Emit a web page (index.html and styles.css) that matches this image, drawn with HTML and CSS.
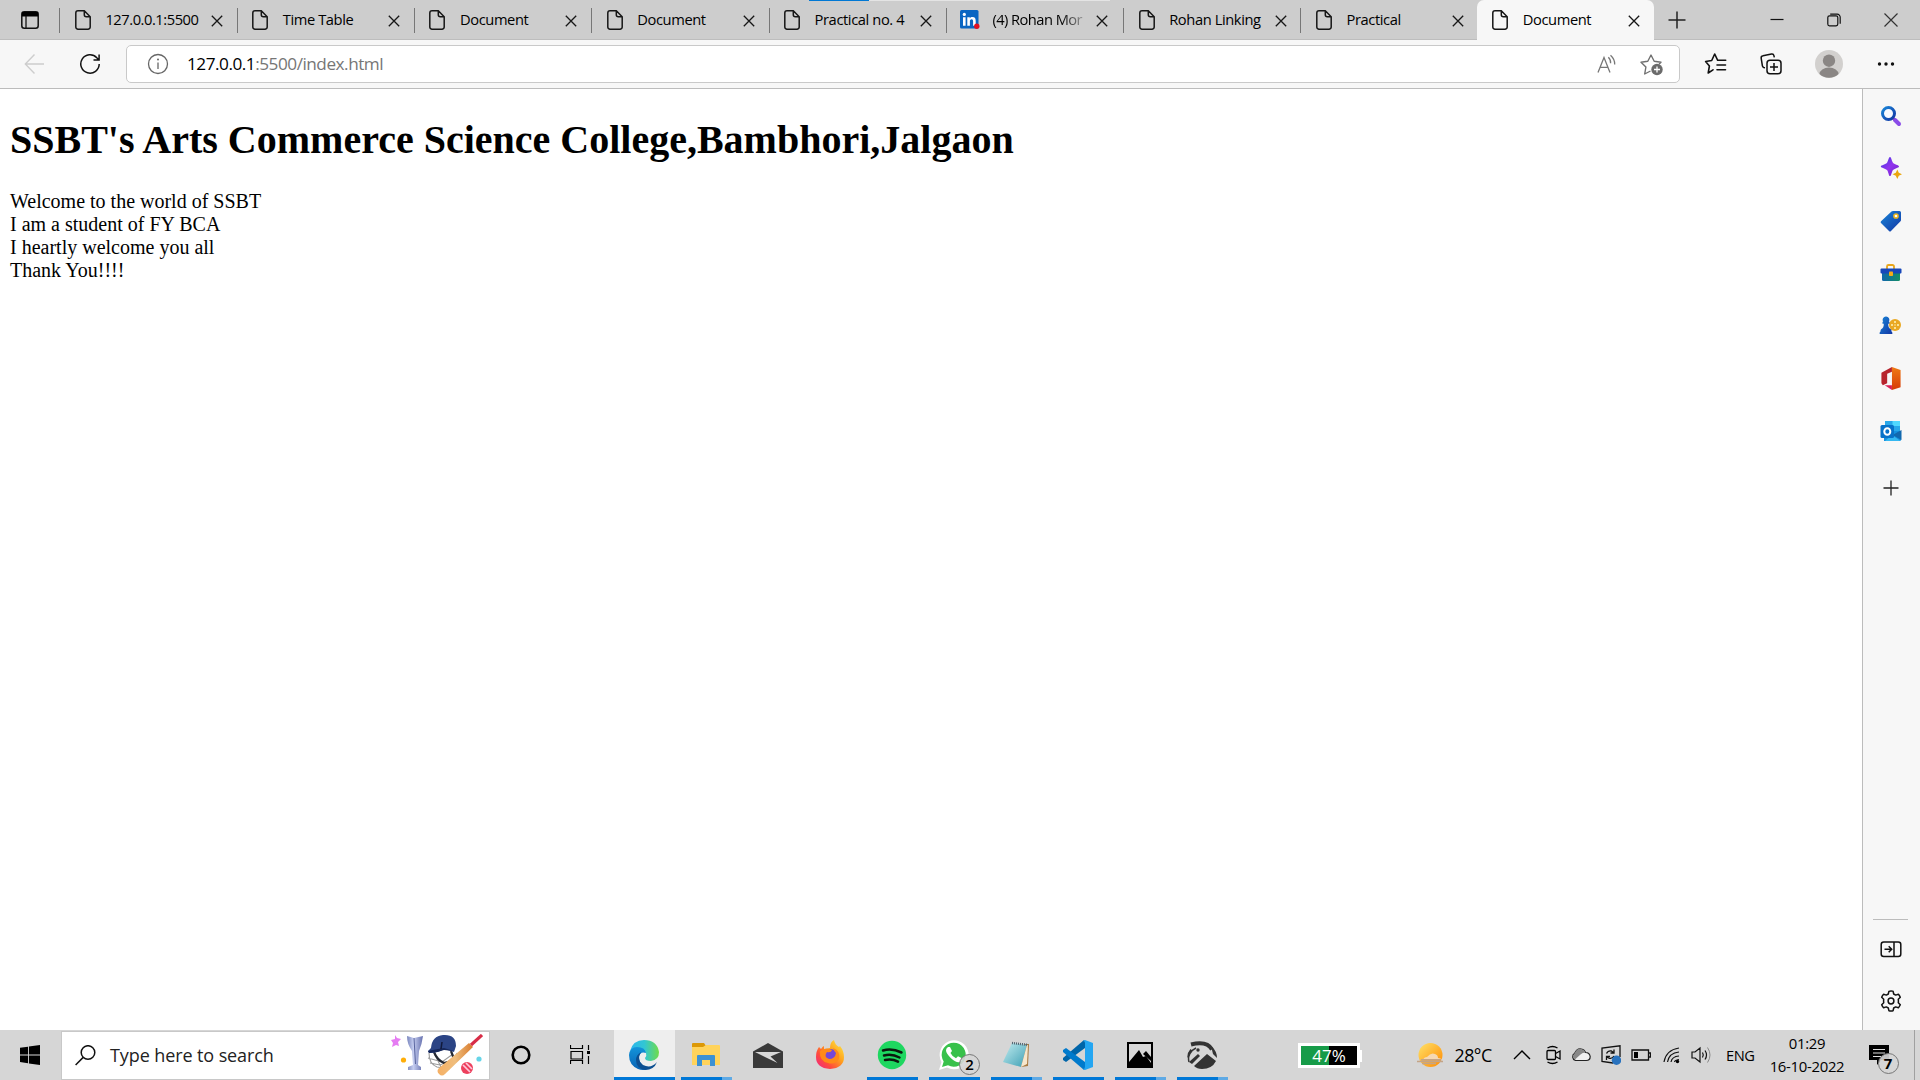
FILE: index.html
```html
<!DOCTYPE html>
<html lang="en">
<head>
<meta charset="utf-8">
<title>Document</title>
<link rel="stylesheet" href="styles.css">
</head>
<body>
<svg class="defs" width="0" height="0">
  <symbol id="file" viewBox="0 0 16 20"><path d="M3 .8h6.3L15.200 6.700V17a2.200 2.200 0 0 1-2.200 2.200H3A2.200 2.200 0 0 1 .8 17V3A2.200 2.200 0 0 1 3 .8zM9.300 1v3.700a2 2 0 0 0 2 2H15" fill="none" stroke="#161616" stroke-width="1.500"/></symbol>
  <symbol id="close" viewBox="0 0 12 12"><path d="M.8.8l10.400 10.400M11.200.8L.8 11.200" fill="none" stroke="#161616" stroke-width="1.300"/></symbol>
</svg>
<div class="screen">
  <header class="tabstrip">
    <div class="tab-menu"><svg width="18" height="18" viewBox="0 0 18 18"><rect x=".8" y=".8" width="16.400" height="16.400" rx="2.500" fill="none" stroke="#111" stroke-width="1.500"/><path d="M1 1h16v4.500H1z" fill="#000"/><path d="M5 5v12" stroke="#111" stroke-width="1.300"/></svg></div>
    <div class="tab"><svg class="favicon"><use href="#file"/></svg><span class="title tight">127.0.0.1:5500</span><svg class="x"><use href="#close"/></svg></div>
    <div class="tab"><svg class="favicon"><use href="#file"/></svg><span class="title">Time Table</span><svg class="x"><use href="#close"/></svg></div>
    <div class="tab"><svg class="favicon"><use href="#file"/></svg><span class="title">Document</span><svg class="x"><use href="#close"/></svg></div>
    <div class="tab"><svg class="favicon"><use href="#file"/></svg><span class="title">Document</span><svg class="x"><use href="#close"/></svg></div>
    <div class="tab"><svg class="favicon"><use href="#file"/></svg><span class="title">Practical no. 4</span><svg class="x"><use href="#close"/></svg></div>
    <div class="tab"><svg class="favicon linkedin" viewBox="0 0 20 20"><rect width="18.500" height="18.500" rx="1.500" fill="#0a66c2"/><path d="M3 7.300h2.600v8.500H3zM7.300 7.300h2.500v1.200c.5-.9 1.500-1.400 2.700-1.400 2.500 0 3.200 1.600 3.200 3.900v4.800h-2.600v-4.300c0-1.100-.2-2.200-1.500-2.200s-1.700 1-1.700 2.100v4.400H7.300z" fill="#fff"/><circle cx="4.300" cy="4.400" r="1.600" fill="#fff"/><circle cx="16.800" cy="16.300" r="2.700" fill="#e01020"/></svg><span class="title fade">(4) Rohan Mor</span><svg class="x"><use href="#close"/></svg></div>
    <div class="tab"><svg class="favicon"><use href="#file"/></svg><span class="title">Rohan Linking</span><svg class="x"><use href="#close"/></svg></div>
    <div class="tab"><svg class="favicon"><use href="#file"/></svg><span class="title">Practical</span><svg class="x"><use href="#close"/></svg></div>
    <div class="tab active"><svg class="favicon"><use href="#file"/></svg><span class="title">Document</span><svg class="x"><use href="#close"/></svg></div>
    <svg class="newtab" width="18" height="18" viewBox="0 0 18 18"><path d="M9 .5v17M.5 9h17" stroke="#222" stroke-width="1.500"/></svg>
    <div class="window-buttons">
      <svg viewBox="0 0 14 14"><path d="M.5 6.500h13" stroke="#111" stroke-width="1.200"/></svg>
      <svg viewBox="0 0 14 14"><g fill="none" stroke="#111" stroke-width="1.200"><rect x=".8" y="2.800" width="10" height="10" rx="1.700"/><path d="M3.200 1.200h7a3 3 0 0 1 3 3v6.600"/></g></svg>
      <svg viewBox="0 0 14 14"><path d="M.5.500l13 13M13.500.500l-13 13" stroke="#333" stroke-width="1.200"/></svg>
    </div>
    <div class="load-bar"></div>
  </header>

  <div class="toolbar">
    <svg class="back" width="21" height="22" viewBox="0 0 21 22"><path d="M20 11H1.500M10.500 1.500L1.300 11l9.200 9.500" fill="none" stroke="#cdcdcd" stroke-width="1.400"/></svg>
    <svg class="reload" width="22" height="22" viewBox="0 0 22 22"><path d="M20.200 11A9.200 9.200 0 1 1 17.800 4.800L20 7M20.100 1.500V7h-5.600" fill="none" stroke="#111" stroke-width="1.500"/></svg>
    <div class="address">
      <svg width="22" height="22" viewBox="0 0 22 22"><circle cx="11" cy="11" r="9.500" fill="none" stroke="#666" stroke-width="1.300"/><path d="M11 9.500v6.500" stroke="#666" stroke-width="1.300"/><circle cx="11" cy="6.600" r="1" fill="#666"/></svg>
      <span class="url">127.0.0.1<span class="path">:5500/index.html</span></span>
      <svg class="read" width="20" height="20" viewBox="0 0 20 20"><g fill="none" stroke="#777" stroke-width="1.300"><path d="M1 18.500L7 3.500l6 15M3.200 13.300h7.600M11.300 3.300q2.600 2.300 2.300 6M13.500 1.200q4.400 4 4.200 9.200"/></g></svg>
      <svg class="star-add" width="24" height="24" viewBox="0 0 24 24"><path d="M10.500 19l-5.800 3 1.200-7L1 10.200l6.800-1L11 3l3.200 6.200 6.800 1-2 2" fill="none" stroke="#707070" stroke-width="1.400" stroke-linejoin="round"/><circle cx="17" cy="17.500" r="5.700" fill="#6b6b6b"/><path d="M17 14.500v6M14 17.500h6" stroke="#fff" stroke-width="1.300"/></svg>
    </div>
    <div class="actions">
      <svg viewBox="0 0 24 24"><path d="M9 17.800l-4.800 3.200 1.200-7L1.600 9.500l6.100-1L10.700 2l3 6.300h8M13 13h8.500M13 17.700h8.500" fill="none" stroke="#111" stroke-width="1.600" stroke-linejoin="round" stroke-linecap="round"/></svg>
      <svg viewBox="0 0 24 24"><g fill="none" stroke="#111" stroke-width="1.500"><rect x="8" y="8.200" width="14" height="13.500" rx="3"/><path d="M15 11v8M11 15h8M6 15.700l-1.300-.2a2 2 0 0 1-1.300-1.600L2.200 6.300A2.200 2.200 0 0 1 4 3.800l8.500-1.700a2.200 2.200 0 0 1 2.500 1.700l.3 1.500"/></g></svg>
      <svg class="avatar" viewBox="0 0 28 28"><circle cx="14" cy="14" r="14" fill="#d2d0ce"/><circle cx="14" cy="10.700" r="6.200" fill="#8a8684"/><path d="M4.500 24a9.500 6.500 0 0 1 19 0A14 14 0 0 1 4.500 24z" fill="#8a8684"/></svg>
      <svg viewBox="0 0 24 24"><g fill="#111"><circle cx="5.500" cy="12" r="1.700"/><circle cx="12" cy="12" r="1.700"/><circle cx="18.500" cy="12" r="1.700"/></g></svg>
    </div>
  </div>

  <div class="middle">
    <main class="page">
      <h1>SSBT's Arts Commerce Science College,Bambhori,Jalgaon</h1>
      <p>Welcome to the world of SSBT<br>I am a student of FY BCA<br>I heartly welcome you all<br>Thank You!!!!</p>
    </main>
    <aside class="sidebar">
      <svg viewBox="0 0 22 22"><defs><linearGradient id="sb" x2="1" y2="1"><stop stop-color="#1a86d8"/><stop offset="1" stop-color="#1236a4"/></linearGradient></defs><path d="M13 13l2 2" stroke="#3a3340" stroke-width="2.500"/><circle cx="8.500" cy="8.500" r="6" fill="#f7faff" stroke="url(#sb)" stroke-width="3"/><path d="M15 15l4 4" stroke="#8a4be8" stroke-width="4" stroke-linecap="round"/></svg>
      <svg viewBox="0 0 22 22"><defs><linearGradient id="pu" x2="1" y2="1"><stop stop-color="#3a3be0"/><stop offset=".5" stop-color="#9333ee"/><stop offset="1" stop-color="#6a25c8"/></linearGradient></defs><path d="M10 0c1.300 0 1.600 3.500 2.800 5.400C14 7.200 19 8 19 9.400s-5 2-6.200 3.800C11.600 15 11.300 19 10 19s-1.500-4-2.800-5.800C6 11.400.800 10.800.800 9.400s5.200-2 6.400-4C8.400 3.500 8.700 0 10 0z" fill="url(#pu)"/><path d="M17.300 12.500l1.500 3.200 3.200 1.500-3.200 1.500-1.500 3.300-1.500-3.300-3.300-1.500 3.300-1.500z" fill="#eaa60d"/></svg>
      <svg viewBox="0 0 22 22"><path d="M13 1h6.500A1.500 1.500 0 0 1 21 2.500V10q0 .7-.5 1.200L11 21q-1 1-2 0L1 13q-.8-.8 0-1.700L11.500 1.600Q12 1 13 1z" fill="url(#sb)"/><circle cx="16" cy="6" r="2.100" fill="#fffef5" stroke="#edb51c" stroke-width="1.500"/></svg>
      <svg viewBox="0 0 22 22"><defs><linearGradient id="gr" x2="1"><stop stop-color="#1166ad"/><stop offset="1" stop-color="#138e65"/></linearGradient></defs><path d="M7 7V4.500A1.500 1.500 0 0 1 8.500 3h4A1.500 1.500 0 0 1 14 4.500V7" fill="none" stroke="#e9a61a" stroke-width="1.800"/><path d="M2 8h18v9.500a1.500 1.500 0 0 1-1.500 1.500h-15A1.500 1.500 0 0 1 2 17.500z" fill="url(#gr)"/><rect x=".5" y="6.500" width="21" height="5" rx="1" fill="#1747ba"/><rect x="9" y="9.500" width="4" height="4.500" rx=".8" fill="#f4ab18"/></svg>
      <svg class="games" viewBox="0 0 22 22"><circle cx="15.500" cy="10" r="6" fill="#e9a821"/><g fill="#fff4b7"><circle cx="12.500" cy="10" r="1"/><circle cx="15.500" cy="7" r="1"/><circle cx="18.500" cy="10" r="1"/><circle cx="15.500" cy="13" r="1"/><circle cx="15.500" cy="10" r=".7"/></g><path d="M6.500 1.500a3.300 3.300 0 0 1 2.800 5.200H10v2H8.700c0 3 .8 4.300 2.300 5.300 1 .7 1 1.500 1 2.500.8.400 1 1.200.8 2.500H.2c-.2-1.300 0-2.100.8-2.500 0-1 0-1.800 1-2.500 1.500-1 2.300-2.300 2.300-5.300H3v-2h.7a3.300 3.300 0 0 1 2.800-5.200z" fill="url(#sb)"/></svg>
      <svg class="office" viewBox="0 0 22 24"><defs><linearGradient id="of" y2="1" x2="0"><stop stop-color="#ef7b14"/><stop offset="1" stop-color="#d63a07"/></linearGradient></defs><path d="M1 6L12 0v5L7 7v10l-4.500 2L1 17z" fill="#b7242d"/><path d="M4.500 19H12v5z" fill="#d91f57"/><path d="M12 0l9 3v18l-9 3z" fill="url(#of)"/></svg>
      <svg viewBox="0 0 22 22"><path d="M5 1h14a1 1 0 0 1 1 1v10H5z" fill="#28a8ea"/><path d="M12.500 1H20v5h-7.500z" fill="#50d9ff"/><path d="M4 11h17v8.500a1.500 1.500 0 0 1-1.500 1.500H4z" fill="#1490df"/><path d="M21.500 10v10l-9-5z" fill="#1268ae"/><path d="M5 21h15.500L12 15z" fill="#35b8f1"/><rect x=".5" y="5" width="13.500" height="13" rx="1.500" fill="#0872c9"/><ellipse cx="7.300" cy="11.500" rx="3" ry="3.300" fill="none" stroke="#fff" stroke-width="2"/></svg>
      <svg class="side-plus" viewBox="0 0 22 22"><path d="M11 3.500v15M3.500 11h15" stroke="#222" stroke-width="1.300"/></svg>
      <div class="side-bottom">
        <svg viewBox="0 0 22 22"><g fill="none" stroke="#111" stroke-width="1.500"><rect x="1.200" y="4" width="19.600" height="14.500" rx="2.500"/><path d="M14 4v14.500M4.500 11.200h7M8.700 8.300l3 2.900-3 3"/></g></svg>
        <svg viewBox="0 0 22 22"><path d="M11 1q1.800 0 2.100.3l.6 2.700 2 1.100 2.700-.8q1 1 1.900 3l-2 2q.2 1.700 0 3.400l2 2q-.9 2-1.900 3l-2.700-.8-2 1.100-.6 2.700Q11 21.300 8.900 20.700L8.300 18l-2-1.100-2.700.8q-1.300-1.300-1.900-3l2-2q-.2-1.700 0-3.400l-2-2q.6-1.700 1.900-3l2.700.8 2-1.100.6-2.700Q9.500 1 11 1z" fill="none" stroke="#111" stroke-width="1.500" stroke-linejoin="round"/><circle cx="11" cy="11" r="2.900" fill="none" stroke="#111" stroke-width="1.500"/></svg>
      </div>
    </aside>
  </div>

  <footer class="taskbar">
    <div class="start"><svg width="20" height="20" viewBox="0 0 20 20"><path d="M0 2.800l8-1.100v7.700H0zM8.900 1.600L20 0v9.400H8.900zM0 10.400h8v7.800l-8-1.100zM8.900 10.400H20V20L8.900 18.400z"/></svg></div>
    <div class="search">
      <svg width="21" height="21" viewBox="0 0 21 21"><circle cx="13" cy="7.500" r="6.800" fill="none" stroke="#111" stroke-width="1.500"/><path d="M8.200 12.400L.6 20" stroke="#111" stroke-width="1.500"/></svg>
      <span class="search-text">Type here to search</span>
      <svg class="cricket" width="92" height="42" viewBox="0 0 92 42">
        <defs><linearGradient id="cup"><stop stop-color="#7885bd"/><stop offset=".4" stop-color="#c5cdf0"/><stop offset="1" stop-color="#6570ae"/></linearGradient><linearGradient id="bat"><stop stop-color="#f6b064"/><stop offset=".5" stop-color="#efbd7c"/><stop offset="1" stop-color="#d87b2d"/></linearGradient></defs>
        <path d="M4 1l2 3 4 1-3 3 1 4-3-1-4 2 1-4-2-3 4-1z" fill="#e57cf2"/><circle cx="12.500" cy="26" r="2.600" fill="#ffae08"/>
        <path d="M16 2l7 2 9-2q-1 8-4 15l-1 14 3 2v3H17v-3l5-2-1-14Q16 10 16 2z" fill="url(#cup)"/><path d="M23 4l1.500 26" stroke="#59659f" stroke-width="1"/>
        <path d="M38 19q0 11 8 14l12 2 8-16M37 24l14 4 11-8M39 29l10 2 12-5M43 19l7 14" fill="none" stroke="#999" stroke-width="1.100"/>
        <path d="M43 18q3 8 10 11l8-2M60 17l3 8" fill="none" stroke="#252933" stroke-width="2.200"/>
        <path d="M37 17l3-3Q41 2 52 1q13-1 13 11l-2 6-10-3q-6 4-15 4z" fill="#2b4485"/><path d="M37 17q9-2 16-3l10 3-10-1q-7 3-15 3z" fill="#16275a"/><path d="M51 8l-1 7" stroke="#111a3b" stroke-width="1.500"/>
        <path d="M78 9l4 4-28 27q-3 3-6 0-3-3 0-6z" fill="url(#bat)"/><path d="M80 11L91 1" stroke="#d82d47" stroke-width="3.200"/>
        <circle cx="76" cy="34" r="6" fill="#ed405d"/><path d="M72 31l7 7M75 29l6 6" stroke="#ffc7db" stroke-width="1.700"/><circle cx="88" cy="25" r="2.600" fill="#66d5e8"/>
      </svg>
    </div>
    <div class="sys cortana"><svg width="20" height="20" viewBox="0 0 20 20"><circle cx="10" cy="10" r="8.300" fill="none" stroke="#000" stroke-width="2.600"/></svg></div>
    <div class="sys task-view"><svg width="20" height="20" viewBox="0 0 20 20"><path d="M.5 0v3.500h12V0M.5 19v-3.500h12V19M1 6.500h11.500v7.500H1zM18.500 0v5M18.500 11v8" fill="none" stroke="#000" stroke-width="1.200"/><path d="M17 6h3v3h-3z"/></svg></div>
    <div class="apps">
      <div class="app current"><svg width="30" height="30" viewBox="0 0 30 30"><defs><linearGradient id="e1" x2="1"><stop stop-color="#2ab5ee"/><stop offset=".5" stop-color="#32c6d3"/><stop offset="1" stop-color="#70dc49"/></linearGradient><linearGradient id="e2" x2="0" y2="1"><stop stop-color="#1394da"/><stop offset="1" stop-color="#0863b4"/></linearGradient></defs><path d="M1 11Q4 0 15 0q13 0 15 12 0 8-8 9-6 0-6-3 2-2 1-5Q13 6 1 11z" fill="url(#e1)"/><path d="M0 15Q1 7 8 7q8 0 9 6-6-2-7 4 0 8 9 12-5 2-10 0Q0 25 0 15z" fill="url(#e2)"/><path d="M12 12q-5 8 2 13 8 4 14-3-3 8-12 8Q7 28 7 20q0-5 5-8z" fill="#0c4f91"/></svg></div>
      <div class="app stack"><svg width="28" height="26" viewBox="0 0 28 26"><path d="M0 2q0-1 1-1h11l2 3-2 4H0z" fill="#dc9806"/><path d="M0 5h11l3-2h13q1 0 1 1v19H0z" fill="#ffd35b"/><path d="M5 24V14q0-1 1-1h16q1 0 1 1v10h-5v-6h-8v6z" fill="#3c91d3"/></svg></div>
      <div class="app"><svg class="mail" width="30" height="25" viewBox="0 0 30 25"><path d="M0 8.500L15 0l15 8.500V25H0z" fill="#3a3a3a"/><path d="M2 9h26L17.500 13.500l7 6.500L13 14.500z" fill="#d8d8d8"/></svg></div>
      <div class="app"><svg width="30" height="30" viewBox="0 0 30 30"><defs><linearGradient id="ff" x1="1" x2="0" y2="1"><stop stop-color="#fff14a"/><stop offset=".4" stop-color="#ffa21d"/><stop offset=".7" stop-color="#ff4b3d"/><stop offset="1" stop-color="#ec228f"/></linearGradient></defs><path d="M4 7l2 2q2-3 3-3v3l6-1q0-6 4-8 1 5 5 7l1-1q4 5 4 11 0 11-14 12Q1 28 1 17 1 11 4 7z" fill="url(#ff)"/><circle cx="16" cy="15" r="6" fill="#7548d7"/><path d="M5 11q5-4 12-1-1 3-5 2-4 5 2 7 6 0 7-6-2-2-3-5 8 3 6 11-4 6-11 4Q4 21 5 11z" fill="#ff8a19"/></svg></div>
      <div class="app open"><svg width="30" height="30" viewBox="0 0 30 30"><circle cx="15" cy="15" r="14.200" fill="#1ed760"/><path d="M6 10.500q9-2.500 18.500 2M7 15.500q8-2 15.500 2M8 20q7-1.700 13 1.700" fill="none" stroke="#0b190e" stroke-width="2.500" stroke-linecap="round"/></svg></div>
      <div class="app open"><svg width="32" height="32" viewBox="0 0 32 32"><path d="M1 31l2.500-8A14.500 14.500 0 1 1 9 28.500z" fill="#fff"/><path d="M4 28l1.700-5.600A12 12 0 1 1 10 26.300z" fill="#38c14b"/><path d="M10 8h2l2 4-1.500 2q2 4 5.500 5.300l2-2 4 2q0 3-3 4-3 .5-8-4-5-5-5-8 0-2 2-3.300z" fill="#fff"/></svg><span class="badge">2</span></div>
      <div class="app stack"><svg width="30" height="28" viewBox="0 0 30 28"><defs><linearGradient id="np" x2="1" y2="1"><stop stop-color="#c3edf0"/><stop offset="1" stop-color="#3e9fb4"/></linearGradient></defs><path d="M24 3h4l-1 22-7 1z" fill="#a97b42"/><path d="M11 2l15 2-6 22-18-5z" fill="url(#np)"/><path d="M26 4l-6 22 6-3 1-19z" fill="#f6e7cd"/><path d="M11 2l16 2" stroke="#526370" stroke-width="2.500" stroke-dasharray="1 1"/></svg></div>
      <div class="app open"><svg width="30" height="30" viewBox="0 0 30 30"><path d="M22 8L3 22l-3-2v-2L21 0l1 1z" fill="#0065a9"/><path d="M22 22L3 8 0 10v2l21 18 1-1z" fill="#007acc"/><path d="M22 0l8 3v24l-8 3-2-1q2 0 2-2V3q0-2-2-2z" fill="#24a6f2"/></svg></div>
      <div class="app stack"><svg width="26" height="26" viewBox="0 0 26 26"><path d="M0 0h26v26H0z"/><path d="M2 2h22v19l-5-7-3 1-4-7L2 20z" fill="#d8d8d8"/><path d="M16 12l3-3 5 6v4z"/></svg></div>
      <div class="app stack"><svg width="30" height="28" viewBox="0 0 30 28"><path d="M4 3.500q16-4 21 5" fill="none" stroke="#333" stroke-width="4"/><path d="M9 7A13 12 0 0 0 2 21M4 8.500a13 12 0 0 0-3 8" fill="none" stroke="#333" stroke-width="1.500"/><path d="M2 21l9-8 2 2-8 8zM7 25L20 13l9 7q-4 8-14 8-5 0-8-3zM24 5q6 5 6 12l-4-4z" fill="#333"/><circle cx="11" cy="9" r="1.700" fill="#333"/></svg></div>
    </div>
    <div class="battery-meter"><span>47%</span></div>
    <div class="weather"><svg width="28" height="25" viewBox="0 0 28 25"><defs><linearGradient id="sun" x2="1" y2="1"><stop stop-color="#ffe268"/><stop offset="1" stop-color="#ff8a00"/></linearGradient></defs><circle cx="14.500" cy="12" r="12" fill="url(#sun)"/><path d="M7 17q1-3 4-3 4-5 8-3 3 1 3 4 3 0 4 2z" fill="#f5d8b3"/><path d="M1 18.500h26M5 16.800h20M6 20.500h14" stroke="#c4a486" stroke-width="1.500"/></svg><span>28°C</span></div>
    <div class="tray">
      <svg class="chevron" viewBox="0 0 20 20"><path d="M2 14l8-8 8 8" fill="none" stroke="#000" stroke-width="1.400"/></svg>
      <svg class="cam" viewBox="0 0 20 20"><g fill="none" stroke="#000" stroke-width="1.300"><rect x="3" y="5.500" width="8.500" height="9" rx="1"/><path d="M11.500 8.500L16 6v8l-4.500-2.500M3.500 3q5-3 10 0M3.500 17q5 3 10 0"/></g></svg>
      <svg class="cloud" viewBox="0 0 20 20"><path d="M4.500 15.500a4 4 0 0 1-.8-7.300Q6 3 10.500 4q3 .5 4 3.500 4 0 4.700 4 0 4-4 4z" fill="#f0f0f0" stroke="#222" stroke-width="1.200"/><path d="M3.700 8.200Q6 3 10.500 4q3 .5 4 3.500-3 0-5 2l-5.500 5q-4-3-.3-6.300z" fill="#888"/></svg>
      <svg class="update" viewBox="0 0 20 20"><path d="M12 18L1 16.500V3L19 .8V12" fill="none" stroke="#111" stroke-width="1.300"/><path d="M5.500 8.500q1.500-3 5-2.500l2 1.500M13 4.500v3.500H9.500M13 11q-2 3.500-5.500 2l-2-1.500M5.500 15v-3.500H9" fill="none" stroke="#111" stroke-width="1.300"/><circle cx="15.500" cy="15.300" r="4.700" fill="#2872be"/></svg>
      <svg class="battery" viewBox="0 0 20 20"><path d="M1 5h16.500v10H1zM18 8h1.500v4H18" fill="none" stroke="#111" stroke-width="1.300"/><path d="M3 7h4v6H3z"/></svg>
      <svg class="wifi" viewBox="0 0 20 20"><g fill="none" stroke="#111" stroke-width="1.200"><path d="M2 17Q4 5 17 3M5.500 17Q7 8 17 7M9 17q1-5.500 8-6M12.500 17q.5-2 4.500-2.500" /></g><circle cx="15.500" cy="16.500" r="1.700"/></svg>
      <svg class="speaker" viewBox="0 0 20 20"><path d="M1 7h3l5-4v14l-5-4H1zM11.500 7.500q1.500 2.500 0 5M14 5.500q3 4.500 0 9" fill="none" stroke="#111" stroke-width="1.200"/><path d="M16.500 2.500q5 7.500 0 15" fill="none" stroke="#888"/></svg>
    </div>
    <span class="lang">ENG</span>
    <div class="clock"><span>01:29</span><span class="date">16-10-2022</span></div>
    <div class="notify"><svg width="20" height="20" viewBox="0 0 20 20"><path d="M0 0h20v15h-8l-4 5v-5H0z"/><path d="M4 4.500h12M4 8h12M4 11.500h8" stroke="#ddd" stroke-width="1.200"/></svg><span class="badge bold">7</span></div>
    <div class="peek"></div>
  </footer>
</div>
</body>
</html>
```
FILE: styles.css
```css
* { box-sizing: border-box; }
body { margin: 0; }
svg { display: block; flex: none; }
.defs { position: absolute; }
.screen {
  display: flex; flex-direction: column;
  width: 1920px; height: 1080px; overflow: hidden;
  background: #fff; color: #000;
  font-family: "Open Sans", "Noto Sans", sans-serif;
}

/* Tabs */
.tabstrip {
  position: relative; display: flex; height: 40px;
  background: #cdcdcd; box-shadow: inset 0 -1px #bdbdbd;
}
.tab-menu { width: 59.400px; padding: 11px 0 0 21px; }
.tab {
  position: relative; display: flex; align-items: center;
  width: 177.300px; height: 40px; padding-left: 15.500px;
}
.tab::before {
  content: ""; position: absolute; left: 0; top: 8px;
  width: 1px; height: 25px; background: #777;
}
.tab.active {
  margin-left: -1px; background: #f7f7f7; border-radius: 7px 7px 0 0;
}
.tab.active::before { display: none; }
.favicon { width: 16px; height: 20px; margin-right: 14.500px; }
.favicon.linkedin { width: 20px; margin: 0 12.500px 0 -1.500px; }
.title {
  width: 96px; white-space: nowrap;
  font-size: 14.700px; line-height: 20px; letter-spacing: -0.400px;
  margin-bottom: 2px;
}
.title.tight { letter-spacing: -0.450px; }
.title.fade {
  width: 94.500px;
  letter-spacing: -0.550px;
  mask-image: linear-gradient(90deg, #000 72%, transparent 104%);
}
.x { width: 12px; height: 12px; margin: 1px 0 0 9.500px; }
.newtab { margin: 11px 0 0 13.500px; }
.window-buttons { display: flex; gap: 43px; margin: 12.500px 22px 0 auto; }
.window-buttons svg { width: 14px; height: 14px; }
.load-bar {
  position: absolute; left: 809px; top: 0; width: 301px; height: 1px;
  background: linear-gradient(90deg, #0078d4 60px, #e4e4e4 60px);
}

/* Address row */
.toolbar {
  display: flex; align-items: center; height: 49px;
  padding: 0 20px 1px 24px; background: #f7f7f7;
  border-bottom: 1px solid #bcbcbc;
}
.reload { margin-left: 34px; }
.address {
  display: flex; align-items: center; width: 1554px; height: 38px;
  margin-left: 25px; padding: 0 15px 0 20px;
  background: #fff; border: 1px solid #c9c9c9; border-radius: 5px;
}
.url {
  margin-left: 18px; white-space: nowrap;
  font-size: 17.200px; line-height: 24px; letter-spacing: -0.480px;
}
.path { color: #767676; }
.read { margin-left: auto; }
.star-add { margin-left: 23px; }
.actions { display: flex; align-items: center; flex: 1; margin-left: 23.500px; }
.actions svg { width: 24px; height: 24px; margin-right: 31px; }
.actions svg.avatar { width: 28px; height: 28px; margin: 0 31px 0 1px; }
.actions svg:last-child { margin: 0; }

/* Web page and side rail */
.middle { display: flex; height: 941px; }
.page {
  flex: 1; padding: 1px 10px 0; border-right: 1px solid #bcbcbc;
  font: 20px/23px "Liberation Serif", "Times New Roman", serif;
}
.page h1 { margin: 26.800px 0; font-size: 40px; line-height: 46px; }
.page p { margin: 0; }
.sidebar {
  display: flex; flex-direction: column; align-items: center;
  width: 57px; padding: 16px 1.500px 0 0; gap: 30.400px; background: #f7f7f7;
}
.sidebar svg { width: 22px; height: 22px; }
.sidebar svg.games { width: 23px; }
.sidebar svg.office { height: 23px; }
.sidebar .side-plus { margin-top: 4px; }
.side-bottom {
  display: flex; flex-direction: column; align-items: center; gap: 30px;
  width: 35px; margin: auto 0 18px; padding-top: 18px;
  border-top: 1px solid #bcbcbc;
}

/* Taskbar */
.taskbar { display: flex; align-items: center; height: 50px; background: #d6d6d6; }
.start { width: 60.500px; padding-left: 20px; }
.search {
  display: flex; align-items: center; width: 429px; height: 49px;
  padding: 0 6px 0 13px; background: #fff; border: 1px solid #c8c8c8;
}
.search-text { margin-left: 14.500px; font-size: 18px; letter-spacing: -0.100px; color: #222; }
.cricket { margin-left: auto; }
.sys { display: flex; justify-content: center; width: 62px; }
.task-view { width: 57px; }
.apps { display: flex; margin-left: 5.500px; }
.app {
  position: relative; display: flex; align-items: center; justify-content: center;
  width: 62px; height: 50px; padding-right: 2px;
}
.app::after { position: absolute; left: 5px; bottom: 0; height: 3px; }
.open::after { content: ""; width: 51px; background: #0078d7; }
.stack::after {
  content: ""; width: 51px;
  background: linear-gradient(90deg, #0078d7 41px, #5faae5 41px);
}
.current { background: linear-gradient(90deg, #eee 61px, transparent 61px); }
.current::after { content: ""; left: 0; width: 61px; background: #0078d7; }
.badge {
  position: absolute; left: 35px; top: 24px; width: 21px; height: 21px;
  border: 1px solid #777; border-radius: 50%; background: #d5d5d5e8;
  font-size: 15px; font-weight: 600; line-height: 19px; text-align: center;
}
.battery-meter {
  position: relative; display: flex; align-items: center; justify-content: center;
  width: 62px; height: 25px; margin-left: 64px;
  border: 3px solid #fff; color: #fff;
  background: linear-gradient(90deg, #169b48 28px, #000 28px) padding-box;
  font-size: 17px;
}
.battery-meter::after {
  content: ""; position: absolute; right: -5px; top: 4px;
  width: 3px; height: 12px; background: #fff;
}
.weather { display: flex; align-items: center; width: 153px; padding-left: 55.500px; }
.weather span { margin-left: 11px; font-size: 17.800px; letter-spacing: -0.500px; }
.tray { display: flex; align-items: center; width: 213px; }
.tray svg { width: 20px; height: 20px; margin-right: 10px; }
.tray .chevron { margin: 0 12px 0 -1px; }
.tray .cam { margin-right: 7px; }
.tray .wifi { margin-left: 1px; margin-right: 9px; }
.lang { width: 43.500px; font-size: 14.700px; letter-spacing: -0.500px; }
.clock {
  display: flex; flex-direction: column; align-items: center; width: 75px;
  font-size: 14.900px; line-height: 22.500px; letter-spacing: -0.300px;
  padding-bottom: 1px; white-space: nowrap;
}
.notify { position: relative; width: 45px; padding-left: 24px; }
.notify .badge { left: 33px; top: 8px; }
.bold { font-weight: 700; }
.peek { width: 1px; height: 50px; margin-left: auto; margin-right: 5px; background: #a0a0a0; }
```
